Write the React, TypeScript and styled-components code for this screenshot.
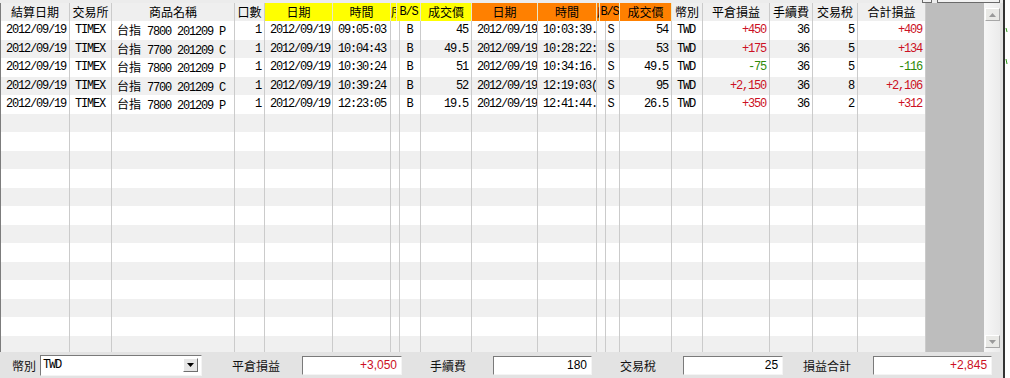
import React from 'react';
import styled, { createGlobalStyle } from 'styled-components';

const MONO = `"Liberation Mono", "Noto Sans CJK TC", monospace`;
const CJK = `"Noto Sans CJK TC", "Noto Sans CJK JP", sans-serif`;

const RED = '#cc1024';
const GREEN = '#2e8a0a';
const LINE = '#cbcbcb';

type Tone = 'plain' | 'yellow' | 'orange';
type Align = 'left' | 'center' | 'right';
type Ink = 'black' | 'red' | 'green';

interface Column {
  title: string;
  width: number;
  align: Align;
  tone: Tone;
}

const columns: Column[] = [
  { title: '結算日期', width: 69, align: 'left', tone: 'plain' },
  { title: '交易所', width: 42, align: 'left', tone: 'plain' },
  { title: '商品名稱', width: 123, align: 'left', tone: 'plain' },
  { title: '口數', width: 30, align: 'right', tone: 'plain' },
  { title: '日期', width: 68, align: 'left', tone: 'yellow' },
  { title: '時間', width: 58, align: 'left', tone: 'yellow' },
  { title: '序', width: 6, align: 'left', tone: 'yellow' },
  { title: 'B/S', width: 24, align: 'center', tone: 'yellow' },
  { title: '成交價', width: 51, align: 'right', tone: 'yellow' },
  { title: '日期', width: 66, align: 'left', tone: 'orange' },
  { title: '時間', width: 59, align: 'left', tone: 'orange' },
  { title: '序', width: 3, align: 'left', tone: 'orange' },
  { title: 'B/S', width: 20, align: 'center', tone: 'orange' },
  { title: '成交價', width: 52, align: 'right', tone: 'orange' },
  { title: '幣別', width: 31, align: 'left', tone: 'plain' },
  { title: '平倉損益', width: 67, align: 'right', tone: 'plain' },
  { title: '手續費', width: 43, align: 'right', tone: 'plain' },
  { title: '交易稅', width: 45, align: 'right', tone: 'plain' },
  { title: '合計損益', width: 68, align: 'right', tone: 'plain' },
];

const template = columns.map((c) => `${c.width}px`).join(' ');

interface Trade {
  strike: string;
  cp: string;
  openTime: string;
  openPrice: string;
  closeTime: string;
  closePrice: string;
  pl: string;
  tax: string;
  net: string;
}

const trades: Trade[] = [
  { strike: '7800', cp: 'P', openTime: '09:05:03', openPrice: '45', closeTime: '10:03:39.5', closePrice: '54', pl: '+450', tax: '5', net: '+409' },
  { strike: '7700', cp: 'C', openTime: '10:04:43', openPrice: '49.5', closeTime: '10:28:22:3', closePrice: '53', pl: '+175', tax: '5', net: '+134' },
  { strike: '7800', cp: 'P', openTime: '10:30:24', openPrice: '51', closeTime: '10:34:16.9', closePrice: '49.5', pl: '-75', tax: '5', net: '-116' },
  { strike: '7700', cp: 'C', openTime: '10:39:24', openPrice: '52', closeTime: '12:19:03(0', closePrice: '95', pl: '+2,150', tax: '8', net: '+2,106' },
  { strike: '7800', cp: 'P', openTime: '12:23:05', openPrice: '19.5', closeTime: '12:41:44.1', closePrice: '26.5', pl: '+350', tax: '2', net: '+312' },
];

const TOTAL_ROWS = 18;

const inkOf = (v: string): Ink => (v.startsWith('+') ? 'red' : v.startsWith('-') ? 'green' : 'black');
const isLatin = (s: string) => /^[\x20-\x7e]+$/.test(s);

const GlobalStyle = createGlobalStyle`
  html, body {
    margin: 0;
    padding: 0;
  }
  body {
    width: 1010px;
    height: 378px;
    overflow: hidden;
    background: #e3e3e3;
    font-family: ${MONO};
  }
`;

const Page = styled.div`
  display: flex;
  width: 1010px;
  height: 378px;
`;

const Panel = styled.div`
  width: 1003px;
  display: flex;
  flex-direction: column;
  background: #e3e3e3;
`;

const TopStrip = styled.div`
  height: 3px;
  display: flex;
  justify-content: flex-end;
  gap: 5px;
  padding-right: 3px;
  background: #ececec;
`;

const ButtonEdge = styled.div<{ $w: number }>`
  width: ${(p) => p.$w}px;
  box-sizing: border-box;
  border: 1px solid #6a6a6a;
  border-top: none;
  background: #f2f2f2;
`;

const GridArea = styled.div`
  height: 349px;
  display: flex;
  border-left: 1px solid #7c7c7c;
`;

const Table = styled.div`
  width: 925px;
  display: flex;
  flex-direction: column;
  overflow: hidden;
  background: #ffffff;
`;

const HeaderRow = styled.div`
  display: grid;
  grid-template-columns: ${template};
  height: 18px;
  flex: none;
`;

const toneBg: Record<Tone, string> = {
  plain: '#efefef',
  yellow: '#ffff00',
  orange: '#ff8000',
};

const HeaderCell = styled.div<{ $tone: Tone }>`
  box-sizing: border-box;
  border-right: 1px solid ${(p) => (p.$tone === 'plain' ? LINE : '#e8e8c8')};
  background: ${(p) => toneBg[p.$tone]};
  font-size: 12px;
  letter-spacing: -1.2px;
  line-height: 18px;
  text-align: center;
  white-space: nowrap;
  overflow: hidden;
  color: #000;
`;

const Row = styled.div<{ $alt: boolean }>`
  display: grid;
  grid-template-columns: ${template};
  height: 18.5px;
  flex: none;
  background: ${(p) => (p.$alt ? '#f0f0f0' : '#ffffff')};
`;

const inkColor: Record<Ink, string> = { black: '#000000', red: RED, green: GREEN };

const Cell = styled.div<{ $align: Align; $ink: Ink }>`
  box-sizing: border-box;
  border-right: 1px solid ${LINE};
  padding: 0 3px 0 5px;
  font-size: 12px;
  letter-spacing: -1.2px;
  line-height: 18px;
  text-align: ${(p) => p.$align};
  color: ${(p) => inkColor[p.$ink]};
  white-space: nowrap;
  overflow: hidden;
`;

const Cjk = styled.span`
  font-family: ${CJK};
  font-size: 12px;
  letter-spacing: 0;
`;

const Filler = styled.div`
  flex: 1;
  background: #bdbdbd;
`;

const Scrollbar = styled.div`
  width: 16px;
  display: flex;
  flex-direction: column;
  justify-content: space-between;
  padding: 5px 0 4px;
  box-sizing: border-box;
  background: linear-gradient(90deg, #f7f7f7, #ebebeb);
`;

const ScrollButton = styled.div`
  width: 15px;
  height: 13px;
  margin-left: 1px;
  box-sizing: border-box;
  border: 1px solid;
  border-color: #ffffff #a7a7a7 #a7a7a7 #ffffff;
  background: #e9e9e6;
  display: flex;
  align-items: center;
  justify-content: center;
`;

const RightGap = styled.div`
  width: 3px;
  background: #e3e3e3;
`;

const Sliver = styled.div`
  width: 7px;
  box-sizing: border-box;
  border-left: 2px solid #333333;
  background: #ffffff;
`;

const Footer = styled.div`
  height: 26px;
  display: flex;
  align-items: center;
  padding-left: 12px;
  background: #e3e3e3;
`;

const FooterLabel = styled.span<{ $gap?: number }>`
  margin-left: ${(p) => p.$gap ?? 0}px;
  font-family: ${CJK};
  font-size: 12px;
  color: #111;
  white-space: nowrap;
`;

const SelectBox = styled.div`
  margin-left: 4px;
  width: 162px;
  height: 21px;
  box-sizing: border-box;
  border: 1px solid;
  border-color: #7a7a7a #f4f4f4 #f4f4f4 #7a7a7a;
  background: #ffffff;
  display: flex;
  align-items: center;
  justify-content: space-between;
  padding: 0 3px 0 2px;
`;

const SelectText = styled.span`
  font-family: ${MONO};
  font-size: 12px;
  letter-spacing: -1.2px;
  color: #000;
`;

const DropButton = styled.div`
  width: 15px;
  height: 14px;
  box-sizing: border-box;
  border: 1px solid;
  border-color: #ffffff #6f6f6f #6f6f6f #ffffff;
  background: #e6e6e6;
  display: flex;
  align-items: center;
  justify-content: center;
`;

const ValueBox = styled.div<{ $w: number; $gap: number; $ink: Ink }>`
  margin-left: ${(p) => p.$gap}px;
  width: ${(p) => p.$w}px;
  height: 19px;
  box-sizing: border-box;
  border: 1px solid;
  border-color: #7a7a7a #f4f4f4 #f4f4f4 #7a7a7a;
  background: #ffffff;
  padding-right: 4px;
  font-family: "Liberation Sans", Arial, sans-serif;
  font-size: 12px;
  line-height: 17px;
  text-align: right;
  color: ${(p) => inkColor[p.$ink]};
`;

const Arrow = ({ up, color }: { up: boolean; color: string }) => (
  <svg width="7" height="4" viewBox="0 0 7 4">
    <path d={up ? 'M0 4 L3.5 0 L7 4 Z' : 'M0 0 L7 0 L3.5 4 Z'} fill={color} />
  </svg>
);

const GreenTicks = () => (
  <svg width="5" height="378" viewBox="0 0 5 378">
    <path d="M1 28 L2 32" stroke="#2e9a1a" strokeWidth="1" />
    <path d="M1 59 L2 64" stroke="#2e9a1a" strokeWidth="1" />
  </svg>
);

const tradeCells = (t: Trade): React.ReactNode[] => [
  '2012/09/19',
  'TIMEX',
  <>
    <Cjk>台指</Cjk> {t.strike} 201209 {t.cp}
  </>,
  '1',
  '2012/09/19',
  t.openTime,
  '',
  'B',
  t.openPrice,
  '2012/09/19',
  t.closeTime,
  '',
  'S',
  t.closePrice,
  'TWD',
  t.pl,
  '36',
  t.tax,
  t.net,
];

export default function App() {
  const empty = Array.from({ length: TOTAL_ROWS - trades.length });

  return (
    <>
      <GlobalStyle />
      <Page>
        <Panel>
          <TopStrip>
            <ButtonEdge $w={10} />
            <ButtonEdge $w={63} />
          </TopStrip>

          <GridArea>
            <Table>
              <HeaderRow>
                {columns.map((c, i) => (
                  <HeaderCell key={i} $tone={c.tone}>
                    {isLatin(c.title) ? c.title : <Cjk>{c.title}</Cjk>}
                  </HeaderCell>
                ))}
              </HeaderRow>

              {trades.map((t, r) => (
                <Row key={r} $alt={r % 2 === 1}>
                  {tradeCells(t).map((v, i) => {
                    const ink = i === 15 || i === 18 ? inkOf(String(v)) : 'black';
                    return (
                      <Cell key={i} $align={columns[i].align} $ink={ink}>
                        {v}
                      </Cell>
                    );
                  })}
                </Row>
              ))}

              {empty.map((_, r) => (
                <Row key={`e${r}`} $alt={(r + trades.length) % 2 === 1}>
                  {columns.map((c, i) => (
                    <Cell key={i} $align={c.align} $ink="black" />
                  ))}
                </Row>
              ))}
            </Table>

            <Filler />

            <Scrollbar>
              <ScrollButton>
                <Arrow up color="#9a9a9a" />
              </ScrollButton>
              <ScrollButton>
                <Arrow up={false} color="#9a9a9a" />
              </ScrollButton>
            </Scrollbar>
            <RightGap />
          </GridArea>

          <Footer>
            <FooterLabel>幣別</FooterLabel>
            <SelectBox>
              <SelectText>TWD</SelectText>
              <DropButton>
                <Arrow up={false} color="#000" />
              </DropButton>
            </SelectBox>
            <FooterLabel $gap={30}>平倉損益</FooterLabel>
            <ValueBox $w={100} $gap={22} $ink="red">+3,050</ValueBox>
            <FooterLabel $gap={28}>手續費</FooterLabel>
            <ValueBox $w={99} $gap={27} $ink="black">180</ValueBox>
            <FooterLabel $gap={28}>交易稅</FooterLabel>
            <ValueBox $w={100} $gap={27} $ink="black">25</ValueBox>
            <FooterLabel $gap={20}>損益合計</FooterLabel>
            <ValueBox $w={119} $gap={22} $ink="red">+2,845</ValueBox>
          </Footer>
        </Panel>

        <Sliver>
          <GreenTicks />
        </Sliver>
      </Page>
    </>
  );
}
